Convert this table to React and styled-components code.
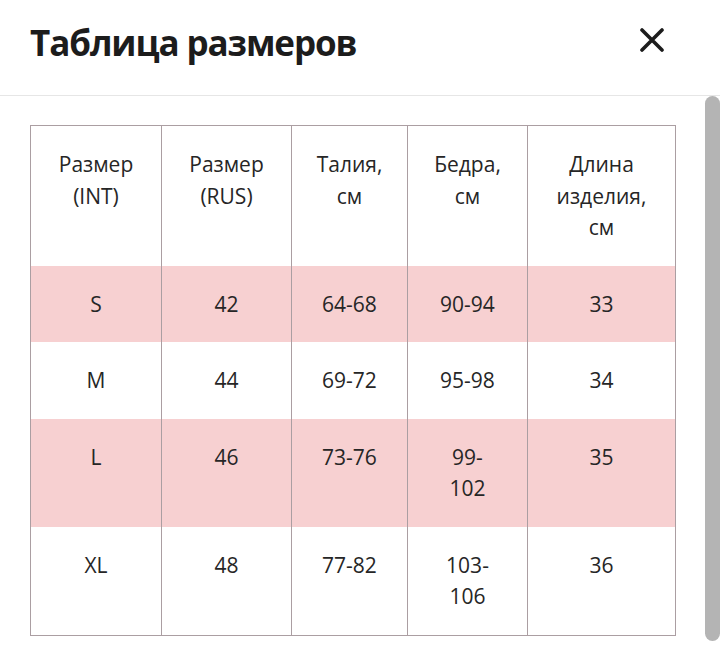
import React from "react";
import styled, { createGlobalStyle } from "styled-components";

const Global = createGlobalStyle`
  html, body { margin: 0; padding: 0; background: #ffffff; }
  body { font-family: "Open Sans", "Noto Sans", sans-serif; color: #262626; }
`;

const Page = styled.div`
  width: 720px;
  height: 652px;
  overflow: hidden;
  display: flex;
  flex-direction: column;
  background: #fff;
`;

const Header = styled.header`
  flex: none;
  display: flex;
  align-items: center;
  justify-content: space-between;
  padding: 0 55px 0 30px;
  border-bottom: 1px solid #e6e6e6;
  box-sizing: border-box;
  height: 96px;
`;

const Title = styled.h1`
  margin: 0 0 10px;
  font-family: "Open Sans", "Noto Sans", sans-serif;
  font-weight: 700;
  font-size: 35px;
  letter-spacing: -1.1px;
  color: #1c1c1c;
`;

const CloseButton = styled.button`
  border: 0;
  background: none;
  padding: 0;
  margin: 0 0 16px;
  width: 26px;
  height: 26px;
  display: flex;
  align-items: center;
  justify-content: center;
  cursor: pointer;
`;

const Body = styled.div`
  flex: 1;
  display: flex;
  min-height: 0;
`;

const Content = styled.div`
  flex: 1;
  padding: 29px 0 0 30px;
`;

const ScrollThumb = styled.div`
  width: 15px;
  height: 545px;
  flex: none;
  background: #b4b4b4;
  border-radius: 8px;
`;

const Table = styled.table`
  width: 645px;
  table-layout: fixed;
  border-collapse: collapse;
  border: 1px solid #ab9ea2;
`;

const Row = styled.tr`
  background: ${(p) => (p.$shaded ? "#f7d0d1" : "#ffffff")};
`;

const Cell = styled.td`
  border-left: 1px solid #ab9ea2;
  border-right: 1px solid #ab9ea2;
  padding: 23px 2px 22px;
  text-align: center;
  vertical-align: top;
  font-size: 21px;
  line-height: 31.5px;
  white-space: pre-line;
  color: #262626;
`;

const HeadCell = styled(Cell).attrs({ as: "th" })`
  font-weight: 400;
`;

const cols = [131, 130, 116, 120, 148];

const headers = ["Размер\n(INT)", "Размер\n(RUS)", "Талия,\nсм", "Бедра,\nсм", "Длина\nизделия,\nсм"];

const rows = [
  ["S", "42", "64-68", "90-94", "33"],
  ["M", "44", "69-72", "95-98", "34"],
  ["L", "46", "73-76", "99-\n102", "35"],
  ["XL", "48", "77-82", "103-\n106", "36"],
];

export default function App() {
  return (
    <Page>
      <Global />
      <Header>
        <Title>Таблица размеров</Title>
        <CloseButton aria-label="Закрыть">
          <svg width="24" height="24" viewBox="0 0 24 24">
            <path d="M2 2 L22 22 M22 2 L2 22" stroke="#1c1c1c" strokeWidth="3.6" strokeLinecap="round" fill="none" />
          </svg>
        </CloseButton>
      </Header>
      <Body>
        <Content>
          <Table>
            <colgroup>
              {cols.map((w, i) => (
                <col key={i} style={{ width: w }} />
              ))}
            </colgroup>
            <thead>
              <Row>
                {headers.map((h, i) => (
                  <HeadCell key={i}>{h}</HeadCell>
                ))}
              </Row>
            </thead>
            <tbody>
              {rows.map((r, i) => (
                <Row key={i} $shaded={i % 2 === 0}>
                  {r.map((c, j) => (
                    <Cell key={j}>{c}</Cell>
                  ))}
                </Row>
              ))}
            </tbody>
          </Table>
        </Content>
        <ScrollThumb />
      </Body>
    </Page>
  );
}
